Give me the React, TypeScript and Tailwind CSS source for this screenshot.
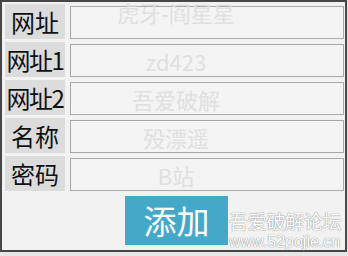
import React from "react";

const rows = [
  { label: "网址", ghost: "虎牙-阎星星", lift: true },
  { label: "网址1", ghost: "zd423" },
  { label: "网址2", ghost: "吾爱破解" },
  { label: "名称", ghost: "殁漂遥" },
  { label: "密码", ghost: "B站" },
];

const cjk = { fontFamily: '"Noto Sans CJK SC", "Noto Sans", sans-serif' };

export default function App() {
  return (
    <div className="w-[348px] h-[256px] bg-[#e6e6e6] overflow-hidden relative" style={cjk}>
      {/* Window */}
      <div className="w-[347px] h-[252px] border-2 border-[#474747] bg-[#f2f2f2] flex flex-col pl-[3px] pr-px pt-[2px]">
        <div className="flex flex-col gap-[3px]">
          {rows.map((r) => (
            <div key={r.label} className="flex h-[35px] gap-[5px]">
              <div
                className={
                  "w-[60px] h-full bg-[#dcdcdc] flex items-center justify-center text-[24px] leading-none text-[#111] whitespace-nowrap " +
                  (r.label.length > 2 ? "tracking-[-1.5px]" : "")
                }
              >
                {r.label}
              </div>
              <div className="flex-1 h-[33px] self-end border border-[#a9a9a9] bg-[#f4f4f4] flex items-center">
                <span
                  className={
                    "w-[210px] text-center text-[22px] leading-none text-[#e0e0e0] whitespace-nowrap " +
                    (r.lift ? "-translate-y-[11px]" : "")
                  }
                >
                  {r.ghost}
                </span>
              </div>
            </div>
          ))}
        </div>

        <div className="pl-[120px] pt-[5px]">
          <button className="w-[103px] h-[49px] bg-[#46a8c9] text-white text-[33px] leading-none flex items-center justify-center">
            添加
          </button>
        </div>
      </div>

      {/* 52pojie watermark */}
      <div className="absolute left-[229px] top-[210px] flex flex-col items-start gap-[2px] text-white [text-shadow:0_0_1px_#8c8c8c,0_0_1px_#8c8c8c]">
        <span className="text-[19px] leading-[22px] tracking-[-0.3px]">吾爱破解论坛</span>
        <span className="text-[16px] leading-[16px]" style={{ fontFamily: '"Liberation Sans", sans-serif' }}>
          www.52pojie.cn
        </span>
      </div>
    </div>
  );
}
